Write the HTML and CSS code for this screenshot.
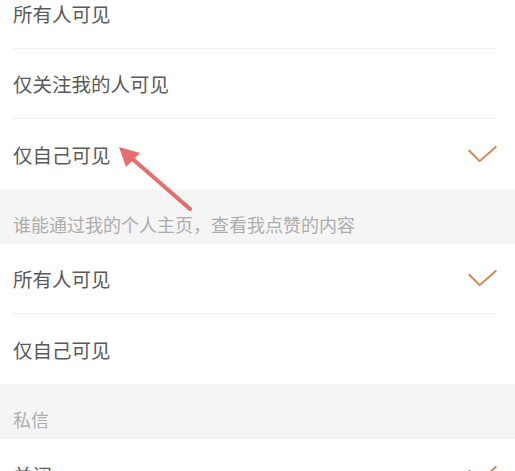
FILE: index.html
```html
<!DOCTYPE html>
<html lang="zh-CN">
<head>
  <meta charset="UTF-8" />
  <meta name="viewport" content="width=device-width, initial-scale=1.0"/>
  <title>隐私设置</title>
  <link rel="stylesheet" href="styles.css">
</head>
<body>

  <div class="page">
    <ul class="option-list first">
      <li class="option"><span>所有人可见</span></li>
      <li class="option"><span>仅关注我的人可见</span></li>
      <li class="option selected">
        <span>仅自己可见</span>
        <svg class="check" viewBox="0 0 30 18"><path d="M1 5 L12 16 L29 1"/></svg>
      </li>
    </ul>

    <div class="section-title">谁能通过我的个人主页，查看我点赞的内容</div>
    <ul class="option-list">
      <li class="option selected">
        <span>所有人可见</span>
        <svg class="check" viewBox="0 0 30 18"><path d="M1 5 L12 16 L29 1"/></svg>
      </li>
      <li class="option"><span>仅自己可见</span></li>
    </ul>

    <div class="section-title">私信</div>
    <ul class="option-list">
      <li class="option selected">
        <span>关闭</span>
        <svg class="check" viewBox="0 0 30 18"><path d="M1 5 L12 16 L29 1"/></svg>
      </li>
    </ul>

    <!-- freccia rossa sopra il contenuto -->
    <svg class="arrow" viewBox="0 0 80 70">
      <path class="arrow-line" d="M74 64 L12 10"/>
      <path class="arrow-head" d="M3 2 L24 8 L10 22 Z"/>
    </svg>
  </div>

</body>
</html>
```

FILE: styles.css
```css
:root {
  --text-color: #5a5a5a;
  --muted-color: #adadad;
  --check-color: #d4844f;
  --divider-color: #efefef;
  --section-bg: #f5f5f5;
}

body {
  margin: 0;
  font-family: "Noto Sans CJK SC", "Noto Sans", sans-serif;
  background-color: #fff;
  color: var(--text-color);
  overflow: hidden;
}

.page {
  position: relative;
}

.option-list {
  list-style: none;
  margin: 0;
  padding: 0 19px 0 13px;
  background: #fff;
}

.option-list.first {
  margin-top: -21px;
}

.option {
  height: 70px;
  display: flex;
  align-items: center;
  justify-content: space-between;
  font-size: 19.5px;
  border-bottom: 1px solid var(--divider-color);
  box-sizing: border-box;
}

.option:last-child {
  border-bottom: none;
}

.check {
  width: 29px;
  height: 17px;
  margin-right: -1px;
}

.check path {
  fill: none;
  stroke: var(--check-color);
  stroke-width: 2;
  stroke-linecap: round;
  stroke-linejoin: round;
}

.section-title {
  background: var(--section-bg);
  color: var(--muted-color);
  font-size: 18px;
  height: 55px;
  box-sizing: border-box;
  padding: 22px 13px 0;
}

.arrow {
  position: absolute;
  left: 116px;
  top: 166px;
  width: 80px;
  height: 70px;
  opacity: 0.85;
}

.arrow-line {
  stroke: #e25555;
  stroke-width: 4;
  stroke-linecap: round;
}

.arrow-head {
  fill: #e25555;
}
```
